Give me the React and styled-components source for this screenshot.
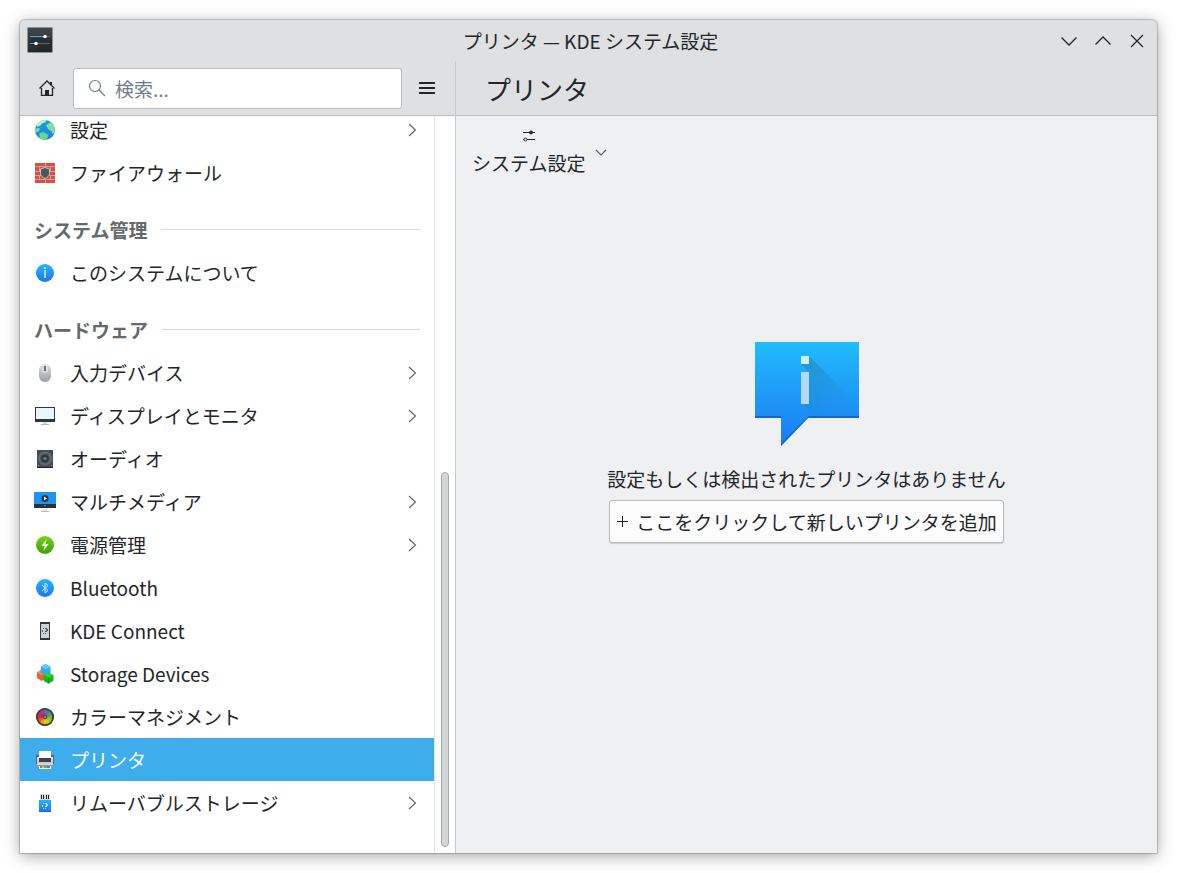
import React from 'react'
import styled, { createGlobalStyle } from 'styled-components'

const wheelColors = [
	'#7b5aa6', '#4f7f9a', '#4f9f6a', '#6cb83c', '#a4c61e', '#d9cf12',
	'#f3c50c', '#f39a12', '#ee5a1c', '#e8253a', '#d81f6c', '#a83a94',
]

const wedge = (index) => {
	const point = (step) => {
		const angle = ((step * 30 - 105) * Math.PI) / 180
		return `${11 + 8 * Math.cos(angle)} ${11 + 8 * Math.sin(angle)}`
	}
	return `M11 11L${point(index)}A8 8 0 0 1 ${point(index + 1.1)}Z`
}

const GlobeIcon = () => (
	<ItemIcon>
		<defs>
			<linearGradient id="sea" x2="0" y2="1">
				<stop stopColor="#1b9fd8" />
				<stop offset="1" stopColor="#1d7df2" />
			</linearGradient>
		</defs>
		<circle cx="11" cy="11" r="10" fill="url(#sea)" />
		<path d="M2.5 5.5C5 2 9 .6 12.5 1.2L11 3.5 8 4.500 6.500 6.500 3 8Z" fill="#b4f2c4" />
		<path d="M1.100 10.500L3 9 6 9.500 5 12 3.500 13 1.500 13.500Z" fill="#7fe29b" />
		<path d="M12 6.500L16 3.500 19 5.300 20.800 9 20.500 13.500 18.500 15 17.500 12 14.500 10.500Z" fill="#7fe29b" />
		<path d="M5.500 14L9.500 13 14.500 16 12.500 20.700 9 20.700 5.500 18.500Z" fill="#62da8c" />
	</ItemIcon>
)

const FirewallIcon = () => (
	<ItemIcon>
		<rect x="1" y="1" width="20" height="20" fill="#b9a9a6" />
		<path
			d="M1 1h10v3H1zM12 1h9v3h-9zM1 5h4v4H1zM6 5h10v4H6zM17 5h4v4h-4zM1 10h10v3H1zM12 10h9v3h-9zM1 14h4v3H1zM6 14h10v3H6zM17 14h4v3h-4zM1 18h10v3H1zM12 18h9v3h-9z"
			fill="#e34b40"
		/>
		<path d="M11 5.500L15.500 7V11.500C15.500 14 13 15.800 11 16.500 9 15.800 6.500 14 6.500 11.500V7Z" fill="#50565a" stroke="#c8c4c2" />
	</ItemIcon>
)

const InfoIcon = () => (
	<ItemIcon>
		<defs>
			<linearGradient id="blue" x2="0" y2="1">
				<stop stopColor="#21b6fb" />
				<stop offset="1" stopColor="#1b77f0" />
			</linearGradient>
		</defs>
		<circle cx="11" cy="11" r="9" fill="url(#blue)" />
		<path d="M10 5h2v2h-2zM10 8h2v8h-2z" fill="#b5dcfc" />
	</ItemIcon>
)

const MouseIcon = () => (
	<ItemIcon>
		<defs>
			<linearGradient id="mouse" x2="0" y2="1">
				<stop stopColor="#dfe1e3" />
				<stop offset="1" stopColor="#999fa5" />
			</linearGradient>
		</defs>
		<rect x="5" y="2" width="12" height="18" rx="6" fill="url(#mouse)" />
		<path d="M9 2.500v7.500h4V2.500" fill="none" stroke="#eceeef" />
		<path d="M10 4h2v5h-2z" fill="#5b7282" />
	</ItemIcon>
)

const MonitorIcon = () => (
	<ItemIcon>
		<path d="M9 17h4v2h-4z" fill="#d7dadb" />
		<path d="M7 19h8v1H7z" fill="#b4b8ba" />
		<rect x="1" y="2" width="20" height="15" fill="#31363b" />
		<rect x="2" y="3" width="18" height="11" fill="#e9f6fb" />
	</ItemIcon>
)

const SpeakerIcon = () => (
	<ItemIcon>
		<rect x="3" y="2" width="16" height="18" fill="#434d56" />
		<path d="M3 19h16v1H3z" fill="#1d2327" />
		<circle cx="11" cy="10.500" r="7" fill="#626c74" />
		<circle cx="11" cy="10.500" r="5" fill="#47515a" />
		<circle cx="11" cy="10.500" r="3.500" fill="#2c353c" />
		<circle cx="11" cy="10.500" r="1.800" fill="#69747c" />
		<path d="M4 17h1v1H4zM17 17h1v1h-1z" fill="#89949b" />
	</ItemIcon>
)

const MultimediaIcon = () => (
	<ItemIcon>
		<path d="M9 18h4v2H9z" fill="#e0e2e3" />
		<path d="M7 20h8v1H7z" fill="#b8bcbe" />
		<rect y="1" width="22" height="16" fill="#2c3136" />
		<rect y="1" width="22" height="12" fill="#1c94f5" />
		<circle cx="11" cy="7.500" r="3.500" fill="#31363b" />
		<path d="M10 5.500v4l3-2z" fill="#fff" />
		<path d="M10 14h2v1h-2z" fill="#2c8fd8" />
	</ItemIcon>
)

const PowerIcon = () => (
	<ItemIcon>
		<defs>
			<linearGradient id="power" x2="0" y2="1">
				<stop stopColor="#73d216" />
				<stop offset="1" stopColor="#3da106" />
			</linearGradient>
		</defs>
		<circle cx="11" cy="11" r="9" fill="url(#power)" />
		<path d="M12.500 5L7.500 12h3L9.500 17 14.500 10h-3z" fill="#f2fbe9" />
	</ItemIcon>
)

const BluetoothIcon = () => (
	<ItemIcon>
		<circle cx="11" cy="11" r="9" fill="url(#blue)" />
		<path d="M8 8l6 5.500-3 2.500V6l3 2.500L8 14" fill="none" stroke="#d7ecfd" />
	</ItemIcon>
)

const PhoneIcon = () => (
	<ItemIcon>
		<rect x="6" y="2" width="10" height="18" fill="#31363b" />
		<rect x="7" y="4" width="8" height="14" fill="#cbd3d7" />
		<path d="M8 10h1v2H8zM9 8h1v1H9zM9 13h1v1H9zM11 8h2v1h1v2h-1v1h-2v-1h1V9h-1zM11 13h1v1h-1z" fill="#4d575e" />
	</ItemIcon>
)

const StorageIcon = () => (
	<ItemIcon>
		<path d="M7 7l5 2.700v6L7.500 18 3 15V9.500z" fill="#f0622a" />
		<path d="M3 9.500l4.500 2.500 4.500-2.300L7 7z" fill="#ff8a48" />
		<path d="M11.500 1l5 2.700v6L11.500 12.200 6.800 9.700v-6z" fill="#2bacf5" />
		<path d="M6.800 3.700l4.700 2.500 5-2.500-5-2.700z" fill="#5fc8fc" />
		<path d="M14.500 9.500l5 2.700v5.500L14.500 20.800 9.800 18v-5.800z" fill="#0fb71a" />
		<path d="M9.800 12.200l4.700 2.600 5-2.600-5-2.700z" fill="#2fd530" />
		<path d="M14.500 14.800v5.500" stroke="#079015" />
	</ItemIcon>
)

const ColorIcon = () => (
	<ItemIcon>
		<circle cx="11" cy="11" r="9" fill="#373c40" />
		{wheelColors.map((color, index) => (
			<path key={color} d={wedge(index)} fill={color} />
		))}
		<circle cx="11" cy="11" r="8" fill="none" stroke="#3a3f43" strokeWidth="1.500" />
		<circle cx="11" cy="11" r="1.800" fill="#8a8f92" stroke="#373c40" />
	</ItemIcon>
)

const PrinterIcon = () => (
	<ItemIcon>
		<defs>
			<linearGradient id="tray" x2="0" y2="1">
				<stop stopColor="#f0f1f1" />
				<stop offset="1" stopColor="#a9adb0" />
			</linearGradient>
		</defs>
		<path d="M2 6h3v11H2zM17 6h3v11h-3z" fill="#5a6167" />
		<path d="M3 8h16v9H3z" fill="url(#tray)" />
		<path d="M2 15h18v2H2z" fill="#8f9498" />
		<path d="M3 14h16v2H3z" fill="#d3d5d7" />
		<path d="M5 2h12v7H5z" fill="#f8f9f9" />
		<path d="M5 9h12v4H5z" fill="#37424f" />
		<path d="M5 17h12v3H5z" fill="#fcfcfc" />
		<path d="M6 17h2v2H6z" fill="#e94b52" />
		<path d="M8 17h2v2H8z" fill="#f6b82c" />
		<path d="M10 17h3v2h-3z" fill="#3ccc55" />
		<path d="M13 17h3v2h-3z" fill="#776bdc" />
	</ItemIcon>
)

const UsbIcon = () => (
	<ItemIcon>
		<path d="M6 2h10v6H6z" fill="#dcdad2" />
		<path d="M7 3h1v4H7zM9 3h1v4H9zM12 3h1v4h-1zM14 3h1v4h-1z" fill="#242424" />
		<path d="M5 8h12v12H5z" fill="url(#blue)" />
		<path d="M5 19h12v1H5z" fill="#1766cb" />
		<path d="M8 13h1v2H8zM9 11h1v1H9zM9 16h1v1H9zM11 11h2v1h1v2h-1v1h-2v-1h1v-2h-1zM11 16h1v1h-1z" fill="#b9e0fc" />
	</ItemIcon>
)

const SettingsLogo = () => (
	<AppLogo viewBox="0 0 26 26" aria-hidden="true">
		<defs>
			<linearGradient id="logo" x2="0" y2="1">
				<stop stopColor="#414950" />
				<stop offset="1" stopColor="#24282b" />
			</linearGradient>
		</defs>
		<rect x=".5" y=".5" width="25" height="25" rx="1" fill="url(#logo)" stroke="#8b9095" />
		<path d="M3 11h20l2 2v12H15L3 17z" fill="#1f2326" opacity=".5" />
		<path d="M17 9.500h6M9 16.500h14" stroke="#5c6369" />
		<path d="M3 9.500h15M3 16.500h6" stroke="#3daee9" />
		<circle cx="18" cy="9.500" r="1.800" fill="#fff" />
		<circle cx="9" cy="16.500" r="1.800" fill="#fff" />
	</AppLogo>
)

const MessageIcon = () => (
	<BigIcon viewBox="0 0 104 104" aria-hidden="true">
		<defs>
			<linearGradient id="bubble" x2="0" y2="1">
				<stop stopColor="#21bbfd" />
				<stop offset="1" stopColor="#1b7af2" />
			</linearGradient>
			<linearGradient id="bubbleShade" gradientUnits="userSpaceOnUse" x1="50" y1="18" x2="82" y2="66">
				<stop stopColor="#2a6f8f" stopOpacity=".4" />
				<stop offset="1" stopColor="#2a6f8f" stopOpacity="0" />
			</linearGradient>
		</defs>
		<path d="M0 0h104v76H53L26 104V76H0z" fill="url(#bubble)" />
		<path d="M54 14l50 50v10H58L46 62h8V30L46 22z" fill="url(#bubbleShade)" />
		<path d="M0 74h26v2H0zM54 74h50v2H53L26 104v-3z" fill="#1268d2" />
		<path d="M46 14h8v8h-8z" fill="#d0ebfe" />
		<path d="M46 30h8v32h-8z" fill="#b3d8fc" />
	</BigIcon>
)

const groups = [
	{
		items: [
			{ name: '設定', icon: GlobeIcon, nested: true },
			{ name: 'ファイアウォール', icon: FirewallIcon },
		],
	},
	{
		title: 'システム管理',
		items: [{ name: 'このシステムについて', icon: InfoIcon }],
	},
	{
		title: 'ハードウェア',
		items: [
			{ name: '入力デバイス', icon: MouseIcon, nested: true },
			{ name: 'ディスプレイとモニタ', icon: MonitorIcon, nested: true },
			{ name: 'オーディオ', icon: SpeakerIcon },
			{ name: 'マルチメディア', icon: MultimediaIcon, nested: true },
			{ name: '電源管理', icon: PowerIcon, nested: true },
			{ name: 'Bluetooth', icon: BluetoothIcon },
			{ name: 'KDE Connect', icon: PhoneIcon },
			{ name: 'Storage Devices', icon: StorageIcon },
			{ name: 'カラーマネジメント', icon: ColorIcon },
			{ name: 'プリンタ', icon: PrinterIcon, active: true },
			{ name: 'リムーバブルストレージ', icon: UsbIcon, nested: true },
		],
	},
]

const App = () => (
	<>
		<GlobalStyle />
		<Window>
			<TitleBar>
				<SettingsLogo />
				<WindowTitle>プリンタ — KDE システム設定</WindowTitle>
				<WindowButtons>
					<WindowButton aria-label="最小化">
						<LineIcon><path d="M.5 4.500l7.500 7.500 7.500-7.500" /></LineIcon>
					</WindowButton>
					<WindowButton aria-label="最大化">
						<LineIcon><path d="M.5 11.500L8 4l7.500 7.500" /></LineIcon>
					</WindowButton>
					<WindowButton aria-label="閉じる">
						<LineIcon><path d="M2 2l12 12M14 2L2 14" /></LineIcon>
					</WindowButton>
				</WindowButtons>
			</TitleBar>
			<Columns>
				<Sidebar>
					<SearchBar>
						<IconButton aria-label="ホーム">
							<LineIcon>
								<path d="M2.500 8v7.500h11V8M.5 8.500L8 1l7.500 7.500" />
								<path d="M6 10h4v6H6zM11 2h2v4l-2-2z" fill="#232629" stroke="none" />
							</LineIcon>
						</IconButton>
						<SearchField>
							<SearchIcon viewBox="0 0 18 18" aria-hidden="true">
								<circle cx="7" cy="7" r="5.500" />
								<path d="M11 11l6 6" />
							</SearchIcon>
							<SearchInput type="text" placeholder="検索..." aria-label="検索" />
						</SearchField>
						<IconButton aria-label="メニュー">
							<LineIcon><path d="M0 3h16M0 8h16M0 13h16" strokeWidth="2" /></LineIcon>
						</IconButton>
					</SearchBar>
					<SidebarBody>
						<Nav>
							{groups.map(({ title, items }) => (
								<Group key={title || 'network'}>
									{title && <GroupTitle>{title}</GroupTitle>}
									<List>
										{items.map(({ name, icon: Icon, nested, active }) => (
											<li key={name}>
												<Item href="#" $active={active} aria-current={active ? 'page' : undefined}>
													<Icon />
													<ItemName>{name}</ItemName>
													{nested && (
														<LineIcon $muted>
															<path d="M5 2l6.500 6L5 14" />
														</LineIcon>
													)}
												</Item>
											</li>
										))}
									</List>
								</Group>
							))}
						</Nav>
						<ScrollTrack>
							<ScrollThumb />
						</ScrollTrack>
					</SidebarBody>
				</Sidebar>
				<Main>
					<PageHeader>
						<PageTitle>プリンタ</PageTitle>
					</PageHeader>
					<Toolbar>
						<ToolButton>
							<ToolLabel>
								<ToolIcon viewBox="0 0 16 16" aria-hidden="true">
									<path d="M2 5.500h12M6 12.500h8M2 12.500h1" />
									<circle cx="10" cy="5.500" r="1.500" fill="#232629" />
									<circle cx="4.500" cy="12.500" r="1.500" />
								</ToolIcon>
								システム設定
							</ToolLabel>
							<LineIcon $muted><path d="M3 6l5 5 5-5" /></LineIcon>
						</ToolButton>
					</Toolbar>
					<Placeholder>
						<MessageIcon />
						<Message>設定もしくは検出されたプリンタはありません</Message>
						<AddButton>
							<PlusIcon viewBox="0 0 11 11" aria-hidden="true">
								<path d="M5.500 0v11M0 5.500h11" />
							</PlusIcon>
							ここをクリックして新しいプリンタを追加
						</AddButton>
					</Placeholder>
				</Main>
			</Columns>
		</Window>
	</>
)

export default App

const GlobalStyle = createGlobalStyle`
  * {
    box-sizing: border-box;
  }

  body {
    margin: 0;
    background: #fff;
    color: #232629;
    font-family: 'Noto Sans CJK JP', sans-serif;
    font-size: 19px;
    line-height: 28px;
  }

  button,
  input {
    font: inherit;
    color: inherit;
  }
`

const Window = styled.div`
  display: flex;
  flex-direction: column;
  height: calc(100vh - 40px);
  margin: 20px;
  overflow: hidden;
  background: #dee0e2;
  border-radius: 5px 5px 0 0;
  box-shadow: 0 0 1px 1px rgba(0, 0, 0, 0.2), 0 3px 16px rgba(0, 0, 0, 0.35);
`

const TitleBar = styled.header`
  display: grid;
  grid-template-columns: 1fr auto 1fr;
  align-items: center;
  height: 41px;
  padding: 0 3px 0 7px;
`

const AppLogo = styled.svg`
  align-self: start;
  width: 26px;
  height: 26px;
  margin-top: 7px;
`

const WindowTitle = styled.div`
  white-space: nowrap;
`

const WindowButtons = styled.div`
  display: flex;
  justify-content: flex-end;
`

const WindowButton = styled.button`
  display: flex;
  align-items: center;
  justify-content: center;
  width: 34px;
  height: 34px;
  padding: 0;
  border: 0;
  background: none;
`

const LineIcon = styled.svg.attrs({ viewBox: '0 0 16 16', 'aria-hidden': true })`
  flex: none;
  width: 16px;
  height: 16px;
  fill: none;
  stroke: ${({ $muted }) => ($muted ? '#5f6265' : '#232629')};
  stroke-width: ${({ $muted }) => ($muted ? 1.1 : 1.3)};
`

const Columns = styled.div`
  display: grid;
  grid-template-columns: 436px 1fr;
  flex: 1;
  min-height: 0;
`

const Sidebar = styled.aside`
  display: flex;
  flex-direction: column;
  min-height: 0;
  border-right: 1px solid #c6c8ca;
`

const SearchBar = styled.div`
  display: flex;
  align-items: center;
  height: 55px;
  padding: 0 7px 0 6px;
  border-bottom: 1px solid #b9bbbd;
`

const IconButton = styled.button`
  display: flex;
  align-items: center;
  justify-content: center;
  flex: none;
  width: 42px;
  height: 41px;
  padding: 0;
  border: 0;
  background: none;
`

const SearchField = styled.label`
  display: flex;
  align-items: center;
  flex: 1;
  gap: 9px;
  height: 41px;
  margin: 0 4px 0 5px;
  padding-left: 14px;
  border: 1px solid #babcbe;
  border-radius: 3px;
  background: #fff;
`

const SearchIcon = styled.svg`
  flex: none;
  width: 18px;
  height: 18px;
  fill: none;
  stroke: #707d8a;
  stroke-width: 1.2;
`

const SearchInput = styled.input`
  flex: 1;
  min-width: 0;
  padding: 2px 0 0;
  border: 0;
  outline: 0;
  background: none;

  &::placeholder {
    color: #707d8a;
    opacity: 1;
  }
`

const SidebarBody = styled.div`
  display: flex;
  flex: 1;
  min-height: 0;
  background: #fff;
`

/* scrolled to the end: the first rows run out under the search bar */
const Nav = styled.nav`
  display: flex;
  flex: 1;
  flex-direction: column;
  justify-content: flex-end;
  overflow: hidden;
  padding-bottom: 29px;
`

const Group = styled.section`
  flex: none;
`

const GroupTitle = styled.h2`
  display: flex;
  align-items: center;
  gap: 14px;
  height: 57px;
  margin: 0;
  padding: 14px 14px 0;
  color: #66696b;
  font-size: 19px;
  font-weight: 700;

  &::after {
    content: '';
    flex: 1;
    height: 1px;
    background: #d6d8d9;
  }
`

const List = styled.ul`
  margin: 0;
  padding: 0;
  list-style: none;
`

const Item = styled.a`
  display: flex;
  align-items: center;
  gap: 14px;
  height: 43px;
  padding: 0 14px;
  background: ${({ $active }) => ($active ? '#3daeeb' : 'transparent')};
  color: ${({ $active }) => ($active ? '#fff' : '#232629')};
  text-decoration: none;
`

const ItemIcon = styled.svg.attrs({ viewBox: '0 0 22 22', 'aria-hidden': true })`
  flex: none;
  width: 22px;
  height: 22px;
`

const ItemName = styled.span`
  flex: 1;
`

const ScrollTrack = styled.div`
  display: flex;
  align-items: flex-end;
  justify-content: center;
  width: 21px;
  padding-bottom: 6px;
  border-left: 1px solid #e3e4e5;
`

const ScrollThumb = styled.div`
  width: 8px;
  height: 51.3%;
  border: 1px solid #a5a7a8;
  border-radius: 4px;
  background: #d5d7d7;
`

const Main = styled.main`
  display: flex;
  flex-direction: column;
  background: #eff0f2;
`

const PageHeader = styled.div`
  display: flex;
  align-items: center;
  height: 55px;
  padding: 2px 29px 0;
  border-bottom: 1px solid #b9bbbd;
  background: #dee0e2;
`

const PageTitle = styled.h1`
  margin: 0;
  font-size: 26px;
  font-weight: 400;
  line-height: 40px;
`

const Toolbar = styled.div`
  display: flex;
  padding: 11px 16px 12px;
`

const ToolButton = styled.button`
  display: flex;
  align-items: center;
  gap: 8px;
  padding: 0;
  border: 0;
  background: none;
`

const ToolLabel = styled.span`
  display: flex;
  flex-direction: column;
  align-items: center;
  gap: 6px;
`

const ToolIcon = styled.svg`
  width: 16px;
  height: 16px;
  fill: none;
  stroke: #232629;
`

const Placeholder = styled.section`
  display: flex;
  flex-direction: column;
  align-items: center;
  padding: 153px 16px 16px;
`

const BigIcon = styled.svg`
  width: 104px;
  height: 104px;
`

const Message = styled.p`
  margin: 19px 0 7px;
`

const AddButton = styled.button`
  display: flex;
  align-items: center;
  gap: 8px;
  height: 43px;
  padding: 0 6px 0 7px;
  border: 1px solid #b9bbbd;
  border-radius: 3px;
  background: #fcfcfc;
  box-shadow: 0 1px 1px rgba(0, 0, 0, 0.15);
`

const PlusIcon = styled.svg`
  width: 11px;
  height: 11px;
  fill: none;
  stroke: #232629;
`
